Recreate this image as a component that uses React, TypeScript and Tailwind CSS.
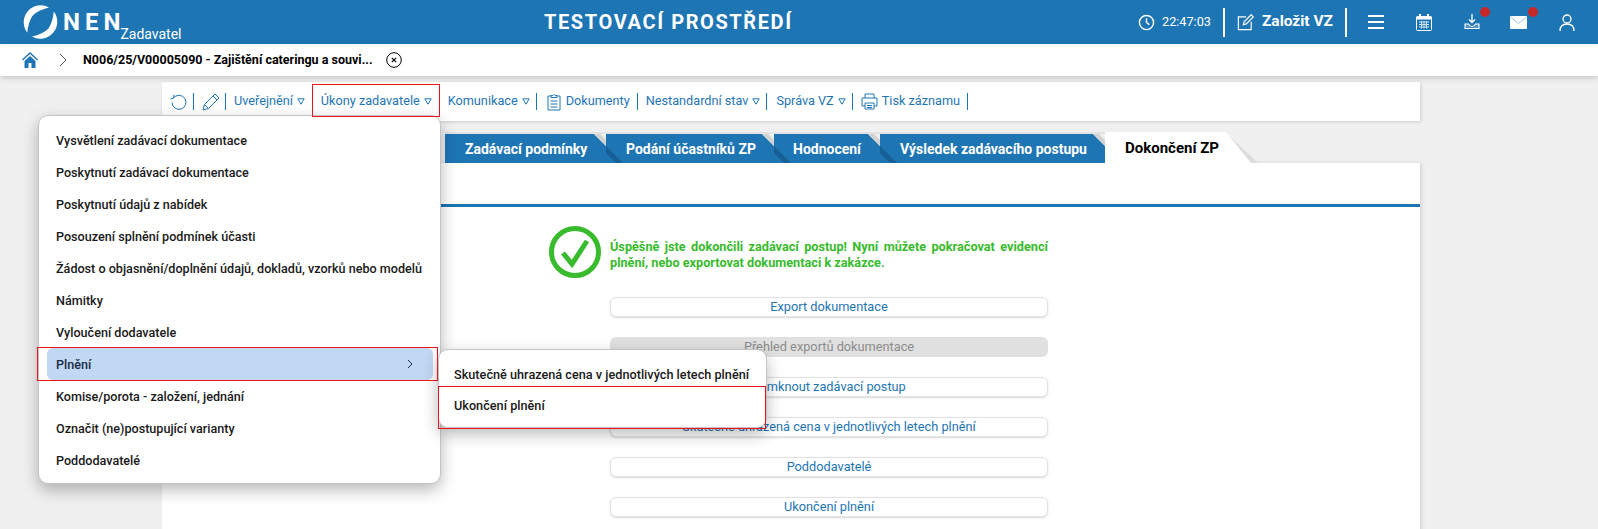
import React from "react";

function Tri({ className = "ml-[4px]" }: { className?: string }) {
  return (
    <svg width="8" height="7" viewBox="0 0 8 7" className={"shrink-0 " + className}>
      <path d="M0.8 0.8H7.2L4 6.2Z" fill="none" stroke="#1e75b4" strokeWidth="1" />
    </svg>
  );
}

function Sep({ className = "" }: { className?: string }) {
  return <span className={"w-px h-[17px] bg-[#1e75b4] shrink-0 " + className} />;
}

function T({ children, className = "" }: { children: React.ReactNode; className?: string }) {
  return <span className={"pb-[2px] whitespace-nowrap " + className}>{children}</span>;
}

const menuItems = [
  "Vysvětlení zadávací dokumentace",
  "Poskytnutí zadávací dokumentace",
  "Poskytnutí údajů z nabídek",
  "Posouzení splnění podmínek účasti",
  "Žádost o objasnění/doplnění údajů, dokladů, vzorků nebo modelů",
  "Námitky",
  "Vyloučení dodavatele",
  "Plnění",
  "Komise/porota - založení, jednání",
  "Označit (ne)postupující varianty",
  "Poddodavatelé",
];

const tabs = [
  { t: "Zadávací podmínky", w: "w-[161px]", pl: "pl-[20px]" },
  { t: "Podání účastníků ZP", w: "w-[168px]", pl: "pl-[20px]" },
  { t: "Hodnocení", w: "w-[106px]", pl: "pl-[19px]" },
  { t: "Výsledek zadávacího postupu", w: "w-[225px]", pl: "pl-[20px]" },
];

const buttons = [
  "Export dokumentace",
  "Přehled exportů dokumentace",
  "Zamknout zadávací postup",
  "Skutečně uhrazená cena v jednotlivých letech plnění",
  "Poddodavatelé",
  "Ukončení plnění",
];

export default function App() {
  return (
    <div className="relative h-[529px] w-[1598px] overflow-hidden bg-[#f0f0f0] font-['Roboto',sans-serif]">
      {/* top bar */}
      <header className="flex h-[44px] items-center bg-[#1e75b4] text-white">
        <div className="flex w-[400px] items-center pl-[23px]">
          <svg width="35" height="34" viewBox="0 0 32 32" className="shrink-0" fill="#fff">
            <path d="M3.500 26A16 16 0 0 1 24 2.300Q14 4.500 8.500 10Q4.500 16 3.500 26Z" />
            <path d="M3.500 26A16 16 0 0 1 24 2.300Q14 4.500 8.500 10Q4.500 16 3.500 26Z" transform="rotate(180 16 16)" />
          </svg>
          <span className="ml-[5px] text-[24px] font-bold leading-none tracking-[5px]">NEN</span>
          <span className="ml-[-5px] mt-[24px] text-[14px] leading-none">Zadavatel</span>
        </div>
        <div className="w-[530px] whitespace-nowrap pl-[144px] text-[20px] font-bold tracking-[1.600px]">TESTOVACÍ PROSTŘEDÍ</div>
        <div className="ml-auto flex items-center">
          <svg width="17" height="17" viewBox="0 0 24 24" fill="none" stroke="#fff" strokeWidth="2" className="mr-[7px]">
            <circle cx="12" cy="12" r="10" />
            <path d="M12 6v6l4 3" />
          </svg>
          <span className="text-[12.700px]">22:47:03</span>
          <span className="ml-[12px] h-[29px] w-[2px] bg-white" />
          <svg width="17" height="17" viewBox="0 0 24 24" fill="none" stroke="#fff" strokeWidth="1.700" className="ml-[12px]">
            <path d="M13 4H2v18h18V11" />
            <path d="M9 15l1-4L20 1l3 3-10 10z" />
          </svg>
          <span className="ml-[8px] text-[15.500px] font-bold">Založit VZ</span>
          <span className="ml-[12px] h-[29px] w-[2px] bg-white" />
          <svg width="16" height="14" viewBox="0 0 16 14" className="ml-[21px]" fill="#fff">
            <rect y="0" width="16" height="2" />
            <rect y="6" width="16" height="2" />
            <rect y="12" width="16" height="2" />
          </svg>
          <svg width="16" height="17" viewBox="0 0 16 17" className="ml-[32px]">
            <rect x="0.500" y="2.500" width="15" height="14" rx="1" fill="none" stroke="#fff" />
            <rect x="0.500" y="2.500" width="15" height="3" fill="#fff" />
            <rect x="3" y="0" width="2" height="4" fill="#fff" />
            <rect x="11" y="0" width="2" height="4" fill="#fff" />
            <path d="M3 8h10M3 10.500h10M3 13h10M5.500 7v7.500M8 7v7.500M10.500 7v7.500" stroke="#cfe3f3" strokeWidth="1" />
          </svg>
          <div className="relative ml-[32px] h-[18px] w-[16px]">
            <svg width="16" height="16" viewBox="0 0 16 16" fill="none" stroke="#fff" className="mt-[1px]">
              <path d="M8 0v8M5 5.500L8 8.500 11 5.500" strokeWidth="1.300" />
              <path d="M1 10v4.500h14V10h-3.500Q10 12.500 8 12.500T4.500 10Z" strokeWidth="1.100" fill="#9cc4e2" fillOpacity="0.4" />
            </svg>
            <span className="absolute left-[16px] top-[-6px] h-[10px] w-[10px] rounded-full bg-[#c62828]" />
          </div>
          <div className="relative ml-[30px] h-[13px] w-[17px]">
            <svg width="17" height="13" viewBox="0 0 17 13">
              <rect width="17" height="13" rx="1" fill="#fff" />
              <path d="M0.500 1L8.500 7.500 16.500 1" fill="none" stroke="#9cc4e2" strokeWidth="1" />
            </svg>
            <span className="absolute left-[18px] top-[-9px] h-[10px] w-[10px] rounded-full bg-[#c62828]" />
          </div>
          <svg width="16" height="17" viewBox="0 0 16 17" fill="none" stroke="#fff" strokeWidth="1.300" className="ml-[32px] mr-[23px]">
            <circle cx="8" cy="5" r="4" />
            <path d="M1 17c0-5 3-7 7-7s7 2 7 7" />
          </svg>
        </div>
      </header>

      {/* breadcrumb bar */}
      <div className="relative flex h-[32px] items-center bg-white pl-[22px] shadow-[0_2px_6px_rgba(0,0,0,0.18)]">
        <svg width="16" height="16" viewBox="0 0 16 16" fill="#1e75b4">
          <path d="M8 0L0 7.500l1 1L8 2l7 6.500 1-1z" />
          <path d="M2.500 9L8 4l5.500 5v7H9.500v-5h-3v5h-4z" />
        </svg>
        <svg width="8" height="14" viewBox="0 0 8 14" fill="none" stroke="#555" strokeWidth="1" className="ml-[21px]">
          <path d="M1 1l6 6-6 6" />
        </svg>
        <span className="ml-[16px] text-[12.500px] font-bold text-black">N006/25/V00005090 - Zajištění cateringu a souvi...</span>
        <svg width="16" height="16" viewBox="0 0 16 16" fill="none" stroke="#000" className="ml-[13px]">
          <circle cx="8" cy="8" r="7.300" />
          <path d="M5.800 5.800l4.400 4.400M10.200 5.800l-4.400 4.400" strokeWidth="1.200" />
        </svg>
      </div>

      {/* main column */}
      <main className="ml-[162px] mt-[6px] w-[1258px]">
        <div className="flex h-[39px] items-center bg-white pl-[8px] text-[12.700px] text-[#1e75b4] shadow-[1px_1px_3px_rgba(0,0,0,0.15)]">
          <svg width="18" height="18" viewBox="0 0 18 18" fill="none" stroke="#1e75b4" strokeWidth="1">
            <path d="M3.500 5A7 7 0 1 1 2 9.500" />
            <path d="M0.500 6L3.500 5 4 1.800" />
          </svg>
          <Sep className="ml-[5px]" />
          <svg width="18" height="18" viewBox="0 0 18 18" fill="none" stroke="#1e75b4" strokeWidth="1" className="ml-[8px]">
            <path d="M1 17l1.500-5.500L13 1l4 4L6.500 15.500z" />
            <path d="M2.500 11.500l4 4M11 3l4 4" />
          </svg>
          <Sep className="ml-[5px]" />
          <T className="ml-[8px]">Uveřejnění</T>
          <Tri />
          <T className="ml-[16px]">Úkony zadavatele</T>
          <Tri />
          <Sep className="ml-[7px]" />
          <T className="ml-[8px]">Komunikace</T>
          <Tri />
          <Sep className="ml-[6px]" />
          <svg width="14" height="18" viewBox="0 0 14 18" fill="none" stroke="#1e75b4" strokeWidth="1" className="ml-[10px]">
            <path d="M4 3H1v14h12V3h-3" />
            <path d="M4 4.500V2.500h2Q7 0.500 8 2.500h2v2z" />
            <path d="M3.500 8h7M3.500 11h7M3.500 14h7" />
          </svg>
          <T className="ml-[5px]">Dokumenty</T>
          <Sep className="ml-[7px]" />
          <T className="ml-[8px]">Nestandardní stav</T>
          <Tri />
          <Sep className="ml-[6px]" />
          <T className="ml-[9px]">Správa VZ</T>
          <Tri />
          <Sep className="ml-[6px]" />
          <svg width="17" height="17" viewBox="0 0 17 17" fill="none" stroke="#1e75b4" strokeWidth="1" className="ml-[8px]">
            <path d="M4 5V1h9v4M4 13H1V5h15v8h-3" />
            <path d="M4 10h9v6H4zM6 12.500h5M6 14.500h5" />
          </svg>
          <T className="ml-[4px]">Tisk záznamu</T>
          <Sep className="ml-[7px]" />
        </div>

        {/* tabs */}
        <div className="mt-[11px] flex h-[31px] items-end pl-[283px]">
          {tabs.map((t, i) => (
            <div key={t.t} className={"relative h-[31px] shrink-0 border-t-[2px] border-[#e2e2e2] " + t.w}>
              <div
                className={
                  "relative flex h-[29px] items-center bg-[#1e75b4] pt-[1px] text-[14px] font-bold text-white [clip-path:polygon(0_0,calc(100%_-_12px)_0,100%_12px,100%_100%,0_100%)] " +
                  t.pl
                }
              >
                {i > 0 && (
                  <svg width="18" height="29" viewBox="0 0 18 29" className="absolute left-0 top-0">
                    <path d="M0 12L17 29H10L0 19Z" fill="#175f94" />
                  </svg>
                )}
                <span className="relative whitespace-nowrap">{t.t}</span>
              </div>
              <svg width="12" height="12" viewBox="0 0 12 12" className="absolute right-0 top-0">
                <path d="M0 0L12 12V6L6 0Z" fill="#d2d2d2" />
              </svg>
            </div>
          ))}
          <div className="relative h-[31px] w-[153px] shrink-0">
            <svg width="153" height="31" viewBox="0 0 153 31" className="absolute left-0 top-0">
              <path d="M120 0L153 31H145L122 8Z" fill="#dcdcdc" />
            </svg>
            <div className="relative flex h-[31px] items-center bg-white pl-[20px] pt-[1px] text-[15px] font-bold text-black [clip-path:polygon(0_0,121px_0,146px_100%,0_100%)]">
              Dokončení ZP
            </div>
          </div>
        </div>

        {/* panel */}
        <div className="h-[400px] bg-white shadow-[2px_0_4px_rgba(0,0,0,0.1)]">
          <div className="h-[44px] border-b-[3px] border-[#1e75b4]" />
          <div className="flex pl-[387px] pt-[19px]">
            <svg width="52" height="52" viewBox="0 0 52 52" fill="none" stroke="#38bb2c" className="shrink-0">
              <circle cx="26" cy="26" r="23.500" strokeWidth="5" />
              <path d="M14 27l9 11L38 15" strokeWidth="5" />
            </svg>
            <p className="ml-[9px] mt-[13px] w-[438px] text-justify text-[12.700px] font-bold leading-[16px] text-[#38bb2c]">
              Úspěšně jste dokončili zadávací postup! Nyní můžete pokračovat evidencí plnění, nebo exportovat dokumentaci k zakázce.
            </p>
          </div>
          <div className="ml-[448px] mt-[19px] flex w-[438px] flex-col gap-[20px]">
            {buttons.map((b, i) => (
              <div
                key={b}
                className={
                  "flex h-[20px] items-center justify-center rounded-[6px] text-[12.750px] " +
                  (i === 1
                    ? "bg-[#e0e0e0] text-[#8c8c8c]"
                    : "border border-[#e2e2e2] bg-white text-[#1e75b4] shadow-[0_1px_2px_rgba(0,0,0,0.15)]")
                }
              >
                {b}
              </div>
            ))}
          </div>
        </div>
      </main>

      {/* dropdown menu */}
      <div className="absolute left-[38px] top-[115px] z-10 h-[369px] w-[403px] rounded-[10px] border border-[#c4c4c4] bg-white pl-[8px] pr-[7px] pt-[8px] shadow-[0_6px_16px_rgba(0,0,0,0.28)]">
        {menuItems.map((m) => (
          <div
            key={m}
            className={
              "flex h-[32px] items-center justify-between rounded-[6px] pl-[9px] pr-[20px] pt-[3px] text-[12.600px] font-medium " +
              (m === "Plnění" ? "bg-[#c0d8f3] text-[#1a2c45]" : "text-[#1a1a1a]")
            }
          >
            <span className="whitespace-nowrap">{m}</span>
            {m === "Plnění" && (
              <svg width="6" height="10" viewBox="0 0 6 10" fill="none" stroke="#1a2c45" strokeWidth="1" className="mb-[3px]">
                <path d="M1 1l4 4-4 4" />
              </svg>
            )}
          </div>
        ))}
      </div>

      {/* submenu */}
      <div className="absolute left-[438px] top-[349px] z-20 flex h-[79px] w-[329px] flex-col rounded-[10px] border border-[#c4c4c4] bg-white pl-[15px] pt-[8px] text-[12.700px] font-medium text-[#1a1a1a] shadow-[0_6px_16px_rgba(0,0,0,0.28)]">
        <div className="flex h-[32px] items-center pt-[1px] whitespace-nowrap">Skutečně uhrazená cena v jednotlivých letech plnění</div>
        <div className="flex h-[32px] items-center">Ukončení plnění</div>
      </div>

      {/* red annotation frames */}
      <div className="absolute left-[312px] top-[84px] z-30 h-[33px] w-[128px] border border-[#e8141e]" />
      <div className="absolute left-[37px] top-[347px] z-30 h-[34px] w-[401px] border border-[#e8141e]" />
      <div className="absolute left-[438px] top-[386px] z-30 h-[43px] w-[328px] border border-[#e8141e]" />
    </div>
  );
}
